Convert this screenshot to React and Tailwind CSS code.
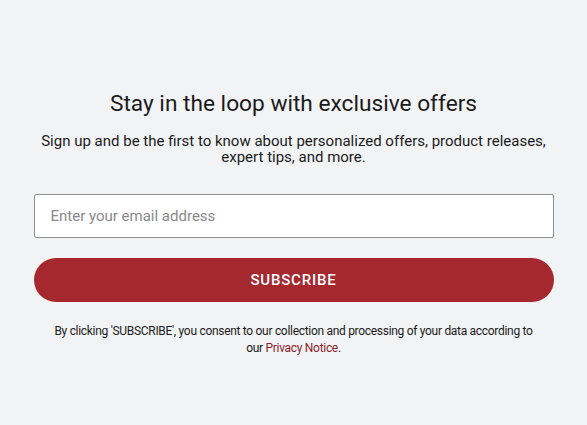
export default function App() {
  return (
    <div className="min-h-[425px] w-full bg-[#f2f3f5] flex justify-center" style={{ fontFamily: "Roboto, 'Liberation Sans', sans-serif" }}>
      <div className="w-[520px] pt-[90px] flex flex-col items-center text-[#1b1b1b]">
        <h2 className="text-[22.7px] leading-[28px] font-normal text-center">Stay in the loop with exclusive offers</h2>
        <p className="mt-[15px] text-[15px] leading-[16px] text-center w-[530px]">
          Sign up and be the first to know about personalized offers, product releases, expert tips, and more.
        </p>
        <input
          type="email"
          placeholder="Enter your email address"
          className="mt-[29px] w-full h-[44px] bg-white border border-[#8f8f8f] rounded-[2px] px-4 text-[15px] text-[#1b1b1b] placeholder:text-[#8a8a8a] outline-none"
        />
        <button className="mt-[20px] w-full h-[44px] rounded-full bg-[#a6282f] text-white text-[15px] font-medium tracking-[0.8px]">
          SUBSCRIBE
        </button>
        <p className="mt-[21px] w-[486px] text-[12px] leading-[17px] tracking-[-0.3px] text-center">
          By clicking 'SUBSCRIBE', you consent to our collection and processing of your data according to our{" "}
          <a className="text-[#8e1f2a]">Privacy Notice</a>.
        </p>
      </div>
    </div>
  );
}
